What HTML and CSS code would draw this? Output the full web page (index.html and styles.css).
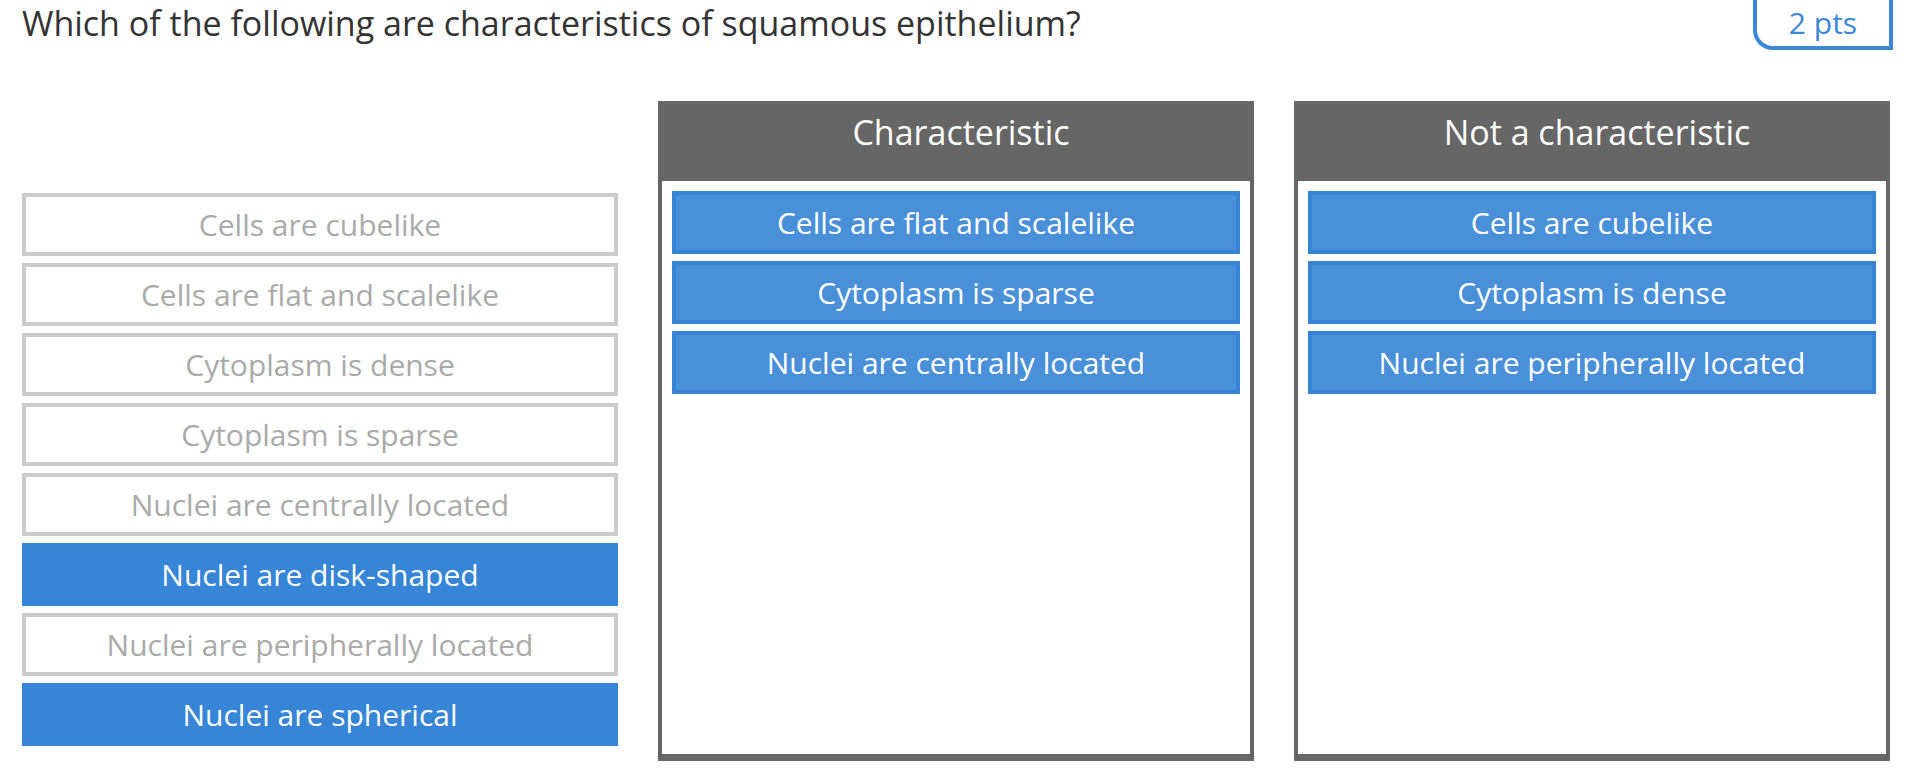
FILE: index.html
```html
<!DOCTYPE html>
<html lang="en">
<head>
  <meta charset="UTF-8" />
  <title>Categorize</title>
  <link rel="stylesheet" href="styles.css">
</head>
<body>
  <div class="question">
    <div class="question-header">
      <h2 class="question-text">Which of the following are characteristics of squamous epithelium?</h2>
      <div class="points">2 pts</div>
    </div>

    <div class="categorize">
      <ul class="choices">
        <li class="choice">Cells are cubelike</li>
        <li class="choice">Cells are flat and scalelike</li>
        <li class="choice">Cytoplasm is dense</li>
        <li class="choice">Cytoplasm is sparse</li>
        <li class="choice">Nuclei are centrally located</li>
        <li class="choice selected">Nuclei are disk-shaped</li>
        <li class="choice">Nuclei are peripherally located</li>
        <li class="choice selected">Nuclei are spherical</li>
      </ul>

      <div class="category">
        <div class="category-title">Characteristic</div>
        <ul class="category-body">
          <li class="placed">Cells are flat and scalelike</li>
          <li class="placed">Cytoplasm is sparse</li>
          <li class="placed">Nuclei are centrally located</li>
        </ul>
      </div>

      <div class="category">
        <div class="category-title">Not a characteristic</div>
        <ul class="category-body">
          <li class="placed">Cells are cubelike</li>
          <li class="placed">Cytoplasm is dense</li>
          <li class="placed">Nuclei are peripherally located</li>
        </ul>
      </div>
    </div>
  </div>
</body>
</html>
```

FILE: styles.css
```css
body {
  margin: 0;
  background: #fff;
  font-family: "Open Sans", "Noto Sans", sans-serif;
  color: #333;
}

ul {
  list-style: none;
  margin: 0;
  padding: 0;
}

.question {
  padding-left: 22px;
  width: 1871px;
}

.question-header {
  display: flex;
  justify-content: space-between;
  align-items: flex-start;
  height: 50px;
}

.question-text {
  margin: 0;
  padding-top: 3px;
  font-size: 34px;
  font-weight: normal;
  line-height: 40px;
  color: #333;
}

.points {
  box-sizing: border-box;
  width: 140px;
  height: 50px;
  padding-top: 3px;
  border: 4px solid #3a87d6;
  border-top: none;
  border-bottom-left-radius: 20px;
  color: #3a87d6;
  font-size: 30px;
  line-height: 40px;
  text-align: center;
}

.categorize {
  display: grid;
  grid-template-columns: 596px 596px 596px;
  column-gap: 40px;
  margin-top: 51px;
  align-items: start;
}

.choices {
  padding-top: 92px;
}

.choice,
.placed {
  box-sizing: border-box;
  height: 63px;
  margin-bottom: 7px;
  padding-top: 1px;
  border: 4px solid #ccc;
  background: #fff;
  color: #aaa;
  font-size: 30px;
  line-height: 54px;
  text-align: center;
  white-space: nowrap;
}

.choice.selected {
  background: #3785d6;
  border-color: #3785d6;
  color: #fff;
}

.category-title {
  box-sizing: border-box;
  height: 80px;
  padding: 8px 0 0 10px;
  background: #666;
  color: #fff;
  font-size: 34px;
  text-align: center;
}

.category-body {
  box-sizing: border-box;
  height: 580px;
  padding: 10px 10px 0;
  border: 4px solid #666;
  border-top: none;
  border-bottom-width: 7px;
}

.placed {
  background: #4a90d9;
  border-color: #3783d4;
  color: #fff;
}
```
